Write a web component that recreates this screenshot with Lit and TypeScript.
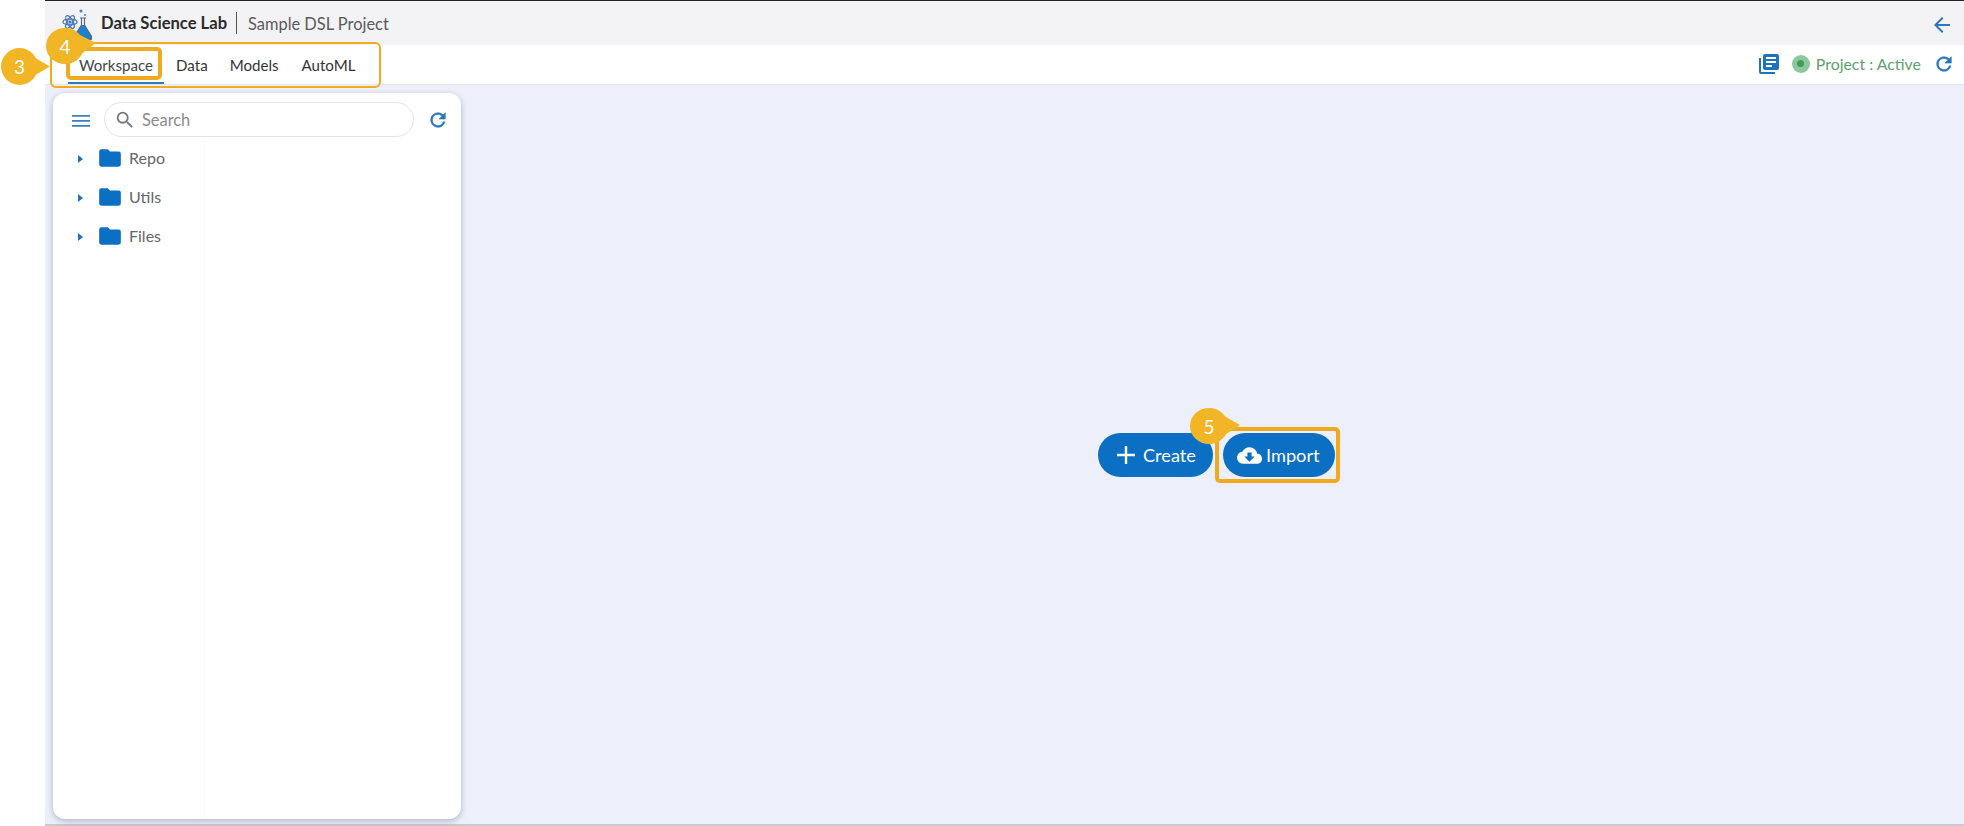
import { LitElement, html, css, svg } from "lit";
import { customElement } from "lit/decorators.js";

const refreshIcon = (cls: string) => html`<svg class=${cls} viewBox="0 0 24 24"><path fill="currentColor" d="M17.65 6.35A7.96 7.96 0 0 0 12 4a8 8 0 1 0 7.73 10h-2.08A6 6 0 1 1 12 6c1.66 0 3.14.69 4.22 1.78L13 11h7V4l-2.35 2.35z" stroke="currentColor" stroke-width="0.6"/></svg>`;

const folder = svg`<path fill="currentColor" d="M10 4H4a2 2 0 0 0-2 2v12a2 2 0 0 0 2 2h16a2 2 0 0 0 2-2V8a2 2 0 0 0-2-2h-8l-2-2z"/>`;

@customElement("app-root")
export class AppRoot extends LitElement {
  static styles = css`
    :host {
      display: block;
      position: relative;
      width: 1964px;
      height: 826px;
      overflow: hidden;
      background: #fff;
      font-family: "Lato", "Open Sans", sans-serif;
      color: #333;
    }
    * { box-sizing: border-box; }
    .app { display: flex; height: 826px; }
    .gutter { width: 45px; flex: none; background: #fff; }
    .main { flex: 1; display: flex; flex-direction: column; border-top: 1px solid #222; border-bottom: 2px solid #c9c9cf; min-width: 0; }
    .header { height: 44px; flex: none; background: #f3f3f6; display: flex; align-items: center; padding: 0 10px 0 17px; }
    .logo { width: 30px; height: 32px; margin-right: 9px; flex: none; margin-top: 2px; }
    .brand { font-weight: 700; font-size: 16.6px; color: #2b2b2b; }
    .divider { width: 1px; height: 22px; background: #555; margin: 0 11px 0 9px; }
    .project { font-size: 16.4px; color: #5a5a5a; flex: 1; }
    .back { width: 24px; height: 24px; color: #2f78bd; margin-top: 4px; }
    .tabs { height: 40px; flex: none; background: #fff; display: flex; align-items: stretch; padding: 0 8px 0 23px; border-bottom: 1px solid #e6e7ee; }
    .tab { font-size: 15.1px; color: #333; display: flex; align-items: center; padding: 2px 11px 0; border-bottom: 2px solid transparent; }
    .tab.active { border-bottom-color: #2b7cc0; color: #444; }
    .tab.data { margin-left: 1px; }
    .tab.models { padding-right: 12px; }
    .spacer { flex: 1; }
    .right { display: flex; align-items: center; color: #5e9e6e; font-size: 15.9px; padding-bottom: 2px; }
    .book { width: 24px; height: 24px; color: #1f73bd; margin-right: 11px; }
    .dot { width: 18px; height: 18px; border-radius: 50%; background: #8cc79c; display: flex; align-items: center; justify-content: center; margin-right: 6px; }
    .dot::after { content: ""; width: 7px; height: 7px; border-radius: 50%; background: #3f9d5c; }
    .status { margin-right: 12px; white-space: nowrap; }
    .re-top { width: 22px; height: 22px; color: #2a76b9; margin-right: 1px; }
    .content { flex: 1; background: #edf0fa; display: flex; min-height: 0; padding: 8px 0 5px 8px; }
    .panel { width: 408px; flex: none; background: #fff; border-radius: 12px; box-shadow: 0 2px 6px rgba(70, 70, 100, 0.35); display: flex; flex-direction: column; padding: 9px 0 0 0; }
    .toolbar { display: flex; align-items: center; height: 35px; padding-left: 18px; }
    .menu { width: 20px; height: 20px; color: #3d7fb8; margin-right: 13px; margin-top: 2px; flex: none; }
    .search { width: 310px; height: 35px; border: 1px solid #e4e4e4; border-radius: 18px; display: flex; align-items: center; padding-left: 9px; font-size: 16.4px; color: #8a8a8a; flex: none; }
    .search svg { width: 22px; height: 22px; color: #77777a; margin-right: 6px; }
    .re-panel { width: 22px; height: 22px; color: #2a76b9; margin-left: 13px; }
    .tree { width: 152px; flex: 1; border-right: 1px solid #fafafa; padding-top: 1px; }
    .row { height: 39px; display: flex; align-items: center; padding-left: 25px; font-size: 16px; color: #666; }
    .caret { width: 0; height: 0; border-left: 5px solid #1f73bd; border-top: 4.5px solid transparent; border-bottom: 4.5px solid transparent; margin-right: 16px; margin-top: 3px; }
    .folder { width: 26px; height: 26px; color: #0b6fc4; margin-right: 6px; margin-left: -2px; }
    .stage { flex: 1; display: flex; align-items: center; justify-content: center; gap: 10px; padding-left: 7px; margin-top: -2px; }
    .btn { height: 44px; border-radius: 22px; background: #0b6fc4; color: #fff; display: flex; align-items: center; font-size: 18.2px; }
    .btn.create { width: 115px; padding-left: 17px; margin-left: 1px; }
    .btn.import { width: 112px; padding-left: 14px; }
    .btn svg { flex: none; }
    .plus { width: 22px; height: 22px; margin-right: 6px; }
    .cloud { width: 25px; height: 25px; margin-right: 4px; }
    .box { position: absolute; border: 2px solid #efaa1f; border-radius: 6px; pointer-events: none; }
    .box.tabs-box { left: 50px; top: 42px; width: 331px; height: 46px; }
    .box.ws-box { left: 66px; top: 47px; width: 96px; height: 33px; border-width: 4px; border-radius: 5px; }
    .box.imp-box { left: 1215px; top: 427px; width: 125px; height: 56px; border-width: 4px; border-radius: 5px; }
    .badge { position: absolute; display: flex; align-items: center; justify-content: center; color: #fff; font-size: 19px; border-radius: 50%; background: #f2b526; }
    .badge svg { position: absolute; left: 0; top: 0; overflow: visible; }
    .badge span { position: relative; }
    .b3 { left: 1px; top: 48px; width: 37px; height: 37px; }
    .b4 { left: 46px; top: 28px; width: 38px; height: 36px; }
    .b5 { left: 1190px; top: 408px; width: 38px; height: 36px; }
  `;

  render() {
    return html`
      <div class="app">
        <div class="gutter"></div>
        <div class="main">
          <div class="header">
            <svg class="logo" viewBox="0 0 30 32">
              <g fill="none" stroke="#4a79b5" stroke-width="1.3">
                <ellipse cx="8" cy="14" rx="7" ry="2.8"/>
                <ellipse cx="8" cy="14" rx="7" ry="2.8" transform="rotate(60 8 14)"/>
                <ellipse cx="8" cy="14" rx="7" ry="2.8" transform="rotate(120 8 14)"/>
              </g>
              <circle cx="8" cy="14" r="1.6" fill="#2f6fb0"/>
              <circle cx="19" cy="3" r="1.6" fill="#3d86cc"/>
              <circle cx="23" cy="7" r="1" fill="#3d86cc"/>
              <path fill="#1f80d0" d="M19.5 17h3l7.500 11.500a2 2 0 0 1-2 3H13a2 2 0 0 1-2-3z"/>
              <path fill="none" stroke="#5b6b80" stroke-width="1.2" d="M18 10h6M19.5 10v7L12 29.5a1.5 1.5 0 0 0 1.4 2h15.2a1.5 1.5 0 0 0 1.4-2L22.500 17v-7"/>
            </svg>
            <span class="brand">Data Science Lab</span>
            <span class="divider"></span>
            <span class="project">Sample DSL Project</span>
            <svg class="back" viewBox="0 0 24 24"><path fill="currentColor" d="M20 11H7.83l5.59-5.59L12 4l-8 8 8 8 1.41-1.41L7.83 13H20z"/></svg>
          </div>
          <div class="tabs">
            <div class="tab active">Workspace</div>
            <div class="tab data">Data</div>
            <div class="tab models">Models</div>
            <div class="tab">AutoML</div>
            <div class="spacer"></div>
            <div class="right">
              <svg class="book" viewBox="0 0 24 24"><path fill="currentColor" d="M4 6H2v14a2 2 0 0 0 2 2h14v-2H4V6zm16-4H8a2 2 0 0 0-2 2v12a2 2 0 0 0 2 2h12a2 2 0 0 0 2-2V4a2 2 0 0 0-2-2zm-1 9H9V9h10v2zm-4 4H9v-2h6v2zm4-8H9V5h10v2z"/></svg>
              <span class="dot"></span>
              <span class="status">Project : Active</span>
              ${refreshIcon("re-top")}
            </div>
          </div>
          <div class="content">
            <div class="panel">
              <div class="toolbar">
                <svg class="menu" viewBox="0 0 20 20"><path fill="currentColor" d="M1 4h18v1.8H1zM1 9h18v1.8H1zM1 14h18v1.8H1z"/></svg>
                <div class="search">
                  <svg viewBox="0 0 24 24"><path fill="currentColor" d="M15.5 14h-.79l-.28-.27A6.47 6.47 0 0 0 16 9.5 6.5 6.5 0 1 0 9.5 16c1.61 0 3.09-.59 4.23-1.57l.27.28v.79l5 4.99L20.49 19l-4.99-5zm-6 0C7.01 14 5 11.99 5 9.5S7.01 5 9.5 5 14 7.01 14 9.5 11.99 14 9.5 14z"/></svg>
                  Search
                </div>
                ${refreshIcon("re-panel")}
              </div>
              <div class="tree">
                ${["Repo", "Utils", "Files"].map(
                  (n) => html`<div class="row"><span class="caret"></span><svg class="folder" viewBox="0 0 24 24">${folder}</svg>${n}</div>`
                )}
              </div>
            </div>
            <div class="stage">
              <div class="btn create">
                <svg class="plus" viewBox="0 0 22 22"><path fill="currentColor" d="M9.8 2h2.4v7.8H20v2.4h-7.8V20H9.8v-7.8H2V9.800h7.800z"/></svg>
                Create
              </div>
              <div class="btn import">
                <svg class="cloud" viewBox="0 0 24 24"><path fill="currentColor" d="M19.35 10.04A7.49 7.49 0 0 0 12 4C9.11 4 6.6 5.64 5.35 8.04A5.994 5.994 0 0 0 0 14c0 3.31 2.69 6 6 6h13c2.76 0 5-2.24 5-5 0-2.64-2.05-4.78-4.65-4.96zM17 13l-5 5-5-5h3V9h4v4h3z"/></svg>
                Import
              </div>
            </div>
          </div>
        </div>
      </div>
      <div class="box tabs-box"></div>
      <div class="box ws-box"></div>
      <div class="box imp-box"></div>
      <div class="badge b3"><svg width="37" height="37"><path fill="#f2b526" d="M24 4L49 18.5 24 33z"/></svg><span>3</span></div>
      <div class="badge b4"><svg width="38" height="36"><path fill="#f2b526" d="M26 3L50 15 30 30z"/></svg><span>4</span></div>
      <div class="badge b5"><svg width="38" height="36"><path fill="#f2b526" d="M20 0L50 17 30 30z"/></svg><span>5</span></div>
    `;
  }
}
